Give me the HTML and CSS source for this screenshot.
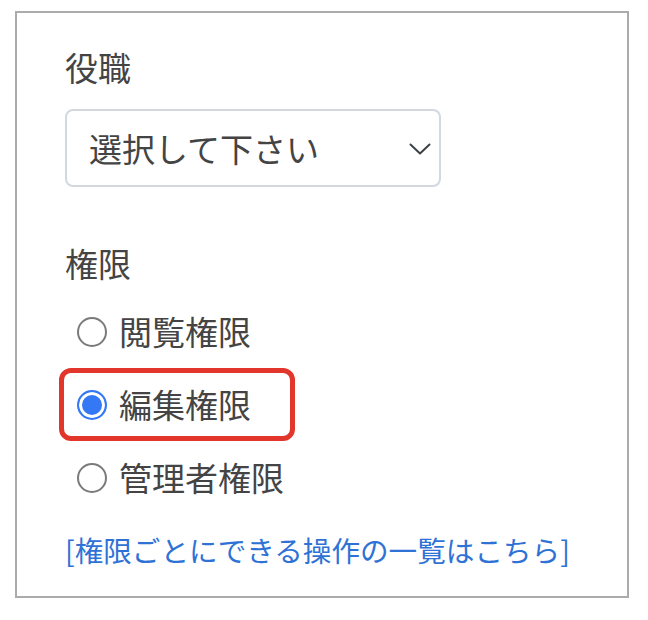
FILE: index.html
```html
<!DOCTYPE html>
<html lang="ja">
<head>
<meta charset="utf-8">
<title>権限設定</title>
<link rel="stylesheet" href="styles.css">
</head>
<body>
<div class="panel">
  <div class="field-label">役職</div>
  <div class="select">
    <span class="select-text">選択して下さい</span>
    <svg class="chevron" width="22" height="12" viewBox="0 0 22 12"><path d="M1.5 1.5 L11 10.5 L20.5 1.5" fill="none" stroke="#3d4247" stroke-width="2" stroke-linecap="round" stroke-linejoin="round"/></svg>
  </div>
  <div class="field-label field-label-2">権限</div>
  <div class="options">
    <label class="option"><input type="radio" name="perm" class="radio"><span>閲覧権限</span></label>
    <label class="option highlight"><input type="radio" name="perm" class="radio" checked><span>編集権限</span></label>
    <label class="option"><input type="radio" name="perm" class="radio"><span>管理者権限</span></label>
  </div>
  <a class="help-link" href="#">[権限ごとにできる操作の一覧はこちら]</a>
</div>
</body>
</html>
```

FILE: styles.css
```css
html, body {
  margin: 0;
  padding: 0;
  background: #ffffff;
}
body {
  font-family: "Noto Sans CJK JP", "Noto Sans", sans-serif;
  color: #444444;
}
.panel {
  margin: 11px 0 0 15px;
  width: 614px;
  height: 587px;
  box-sizing: border-box;
  border: 2px solid #ababab;
  padding: 30px 0 0 48px;
  display: flex;
  flex-direction: column;
  align-items: flex-start;
}
.field-label {
  font-size: 33px;
  line-height: 48px;
  height: 48px;
}
.field-label-2 {
  margin-top: 52px;
}
.select {
  margin-top: 18px;
  width: 376px;
  height: 78px;
  box-sizing: border-box;
  border: 2px solid #d3d8de;
  border-radius: 8px;
  padding: 0 8px 0 22px;
  display: flex;
  align-items: center;
  justify-content: space-between;
}
.select-text {
  font-size: 33px;
  line-height: 1;
  color: #444444;
}
.chevron {
  display: block;
  margin-top: 2px;
}
.options {
  margin-top: 8px;
  margin-left: -6px;
  display: flex;
  flex-direction: column;
}
.option {
  height: 73px;
  box-sizing: border-box;
  border: 5px solid transparent;
  border-radius: 12px;
  padding-left: 13px;
  display: flex;
  align-items: center;
  gap: 12px;
  font-size: 33px;
  line-height: 1;
}
.option.highlight {
  border-color: #e2352b;
  width: 236px;
}
.radio {
  appearance: none;
  -webkit-appearance: none;
  margin: 0;
  width: 30px;
  height: 30px;
  box-sizing: border-box;
  border: 2px solid #7a7a7a;
  border-radius: 50%;
  background: #ffffff;
  flex: none;
}
.radio:checked {
  border: 2px solid #3478f6;
  background: #3478f6;
  box-shadow: inset 0 0 0 3px #ffffff;
}
.help-link {
  margin-top: 15px;
  font-size: 28.6px;
  line-height: 42px;
  color: #2f72d6;
  text-decoration: none;
}
```
